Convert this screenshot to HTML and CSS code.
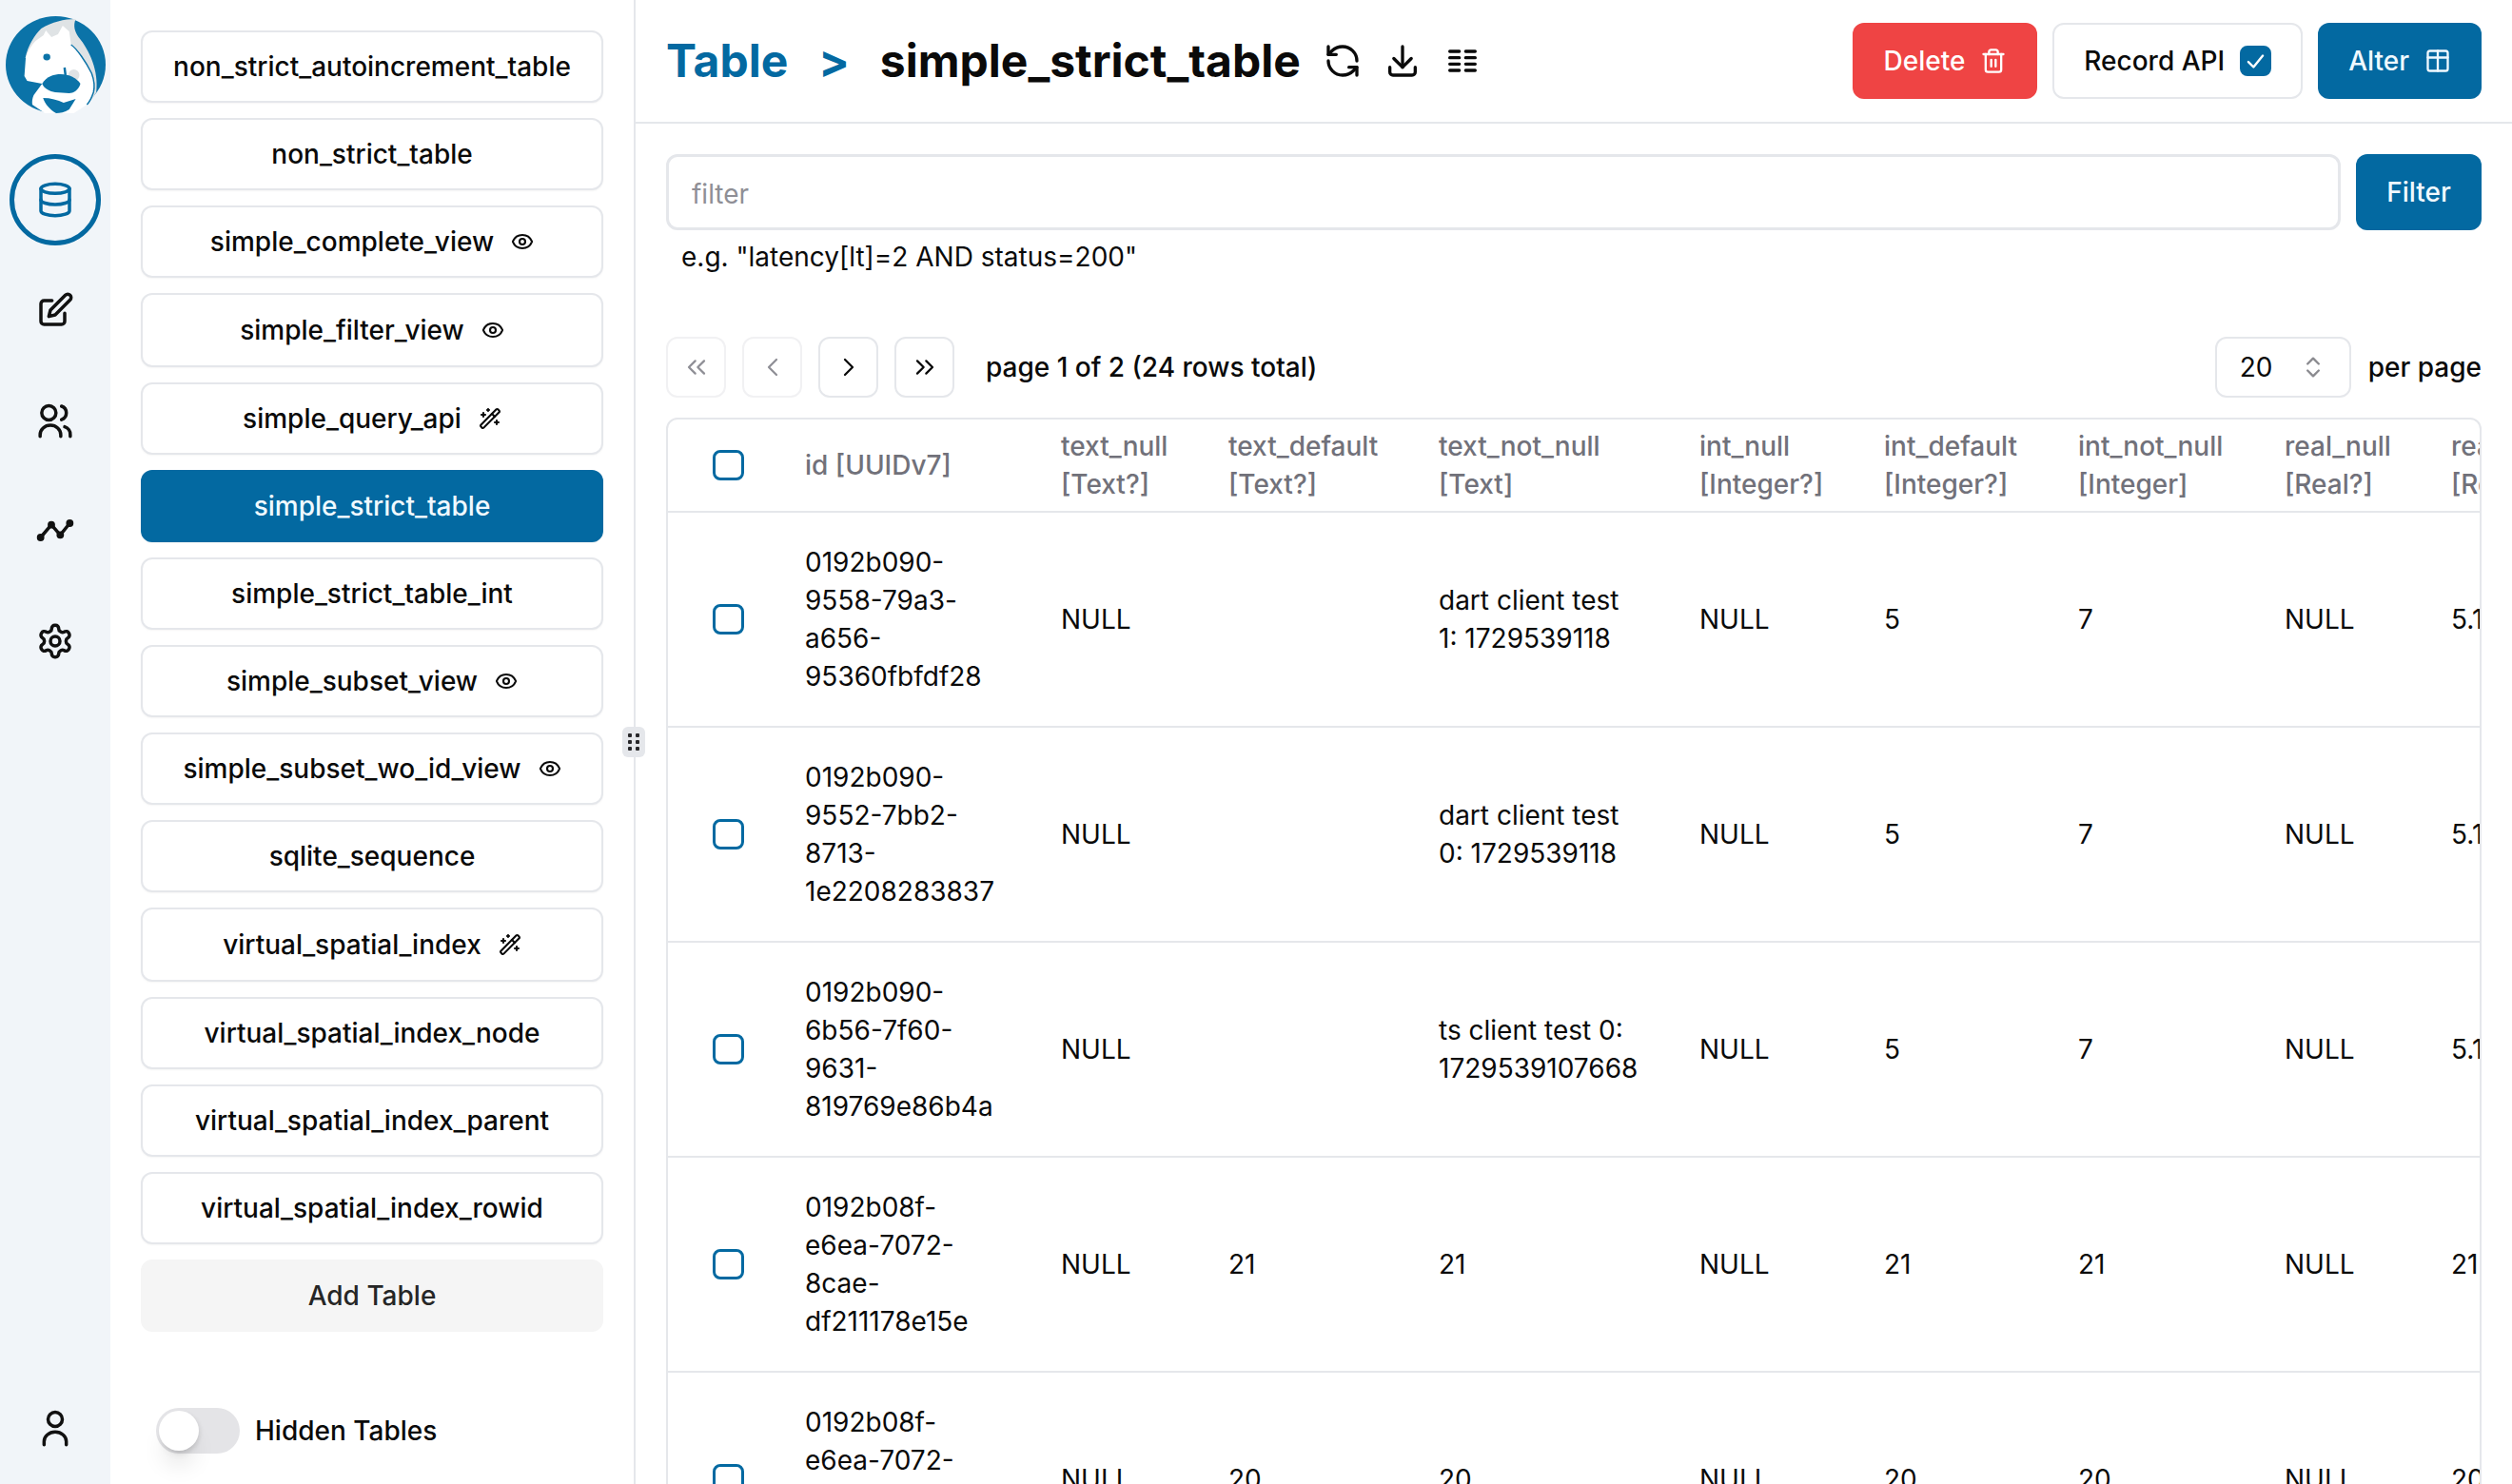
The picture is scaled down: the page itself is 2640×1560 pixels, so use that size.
FILE: index.html
```html
<!DOCTYPE html>
<html lang="en">
<head>
    <meta charset="UTF-8">
    <title>Table - simple_strict_table</title>
    <link rel="stylesheet" href="styles.css">
</head>
<body>
<svg class="sprites" xmlns="http://www.w3.org/2000/svg">
    <symbol id="i-eye" viewBox="0 0 24 24"><path d="M2.06 12.35a1 1 0 0 1 0-.7 10.75 10.75 0 0 1 19.88 0 1 1 0 0 1 0 .7 10.75 10.75 0 0 1-19.88 0"/><circle cx="12" cy="12" r="3"/></symbol>
    <symbol id="i-wand" viewBox="0 0 24 24"><path d="m21.64 3.64-1.28-1.28a1.21 1.21 0 0 0-1.72 0L2.36 18.64a1.21 1.21 0 0 0 0 1.72l1.28 1.28a1.2 1.2 0 0 0 1.72 0L21.64 5.36a1.2 1.2 0 0 0 0-1.72"/><path d="m14 7 3 3"/><path d="M5 6v4"/><path d="M19 14v4"/><path d="M10 2v2"/><path d="M7 8H3"/><path d="M21 16h-4"/><path d="M11 3H9"/></symbol>
</svg>

<div class="app">
    <nav class="rail">
        <svg class="logo" viewBox="0 0 107 102" preserveAspectRatio="none">
            <ellipse cx="53.5" cy="51" rx="53.5" ry="51" fill="#0b73a8"/>
            <path d="M21 44C24 30 31 20 38 13 50 6 62 3 75 3 72 10 74 16 78 22 90 36 100 58 97 80L92 88 60 60Z" fill="#dfe3e5"/>
            <path d="M20 63 21.5 43C24 36 28 30 32 26L40.5 20 43 15 49 22 56 19 61 10 68 16 70 30C76 34 86 48 92 60 95 68 95 76 94 80 92 86 90 90 87 93L73 102H42L28.5 93C28 90 28.5 86 30 83L39 71 23 68Z" fill="#fff"/>
            <path d="M70 30C76 34 86 48 92 60 95 68 95 76 94 80 92 86 90 90 87 93" fill="none" stroke="#0b73a8" stroke-width="1.5"/>
            <ellipse cx="44" cy="43" rx="3.8" ry="3.4" fill="#0b73a8"/>
            <circle cx="73" cy="62" r="6" fill="#dfe3e5"/>
            <path d="M63 54 64 62" stroke="#0b73a8" stroke-width="2.5" fill="none"/>
            <path d="M39 71C44 63 52 61 59 61 68 61 76 65 80 71 78 78 72 81 68 81L53 80C47 79 41 76 39 71Z" fill="#0b73a8"/>
            <path d="M40 86C48 86 56 88 62 91L75 87 68 98C63 101 58 102 54 102 47 98 42 92 40 86Z" fill="#0b73a8"/>
        </svg>

        <a class="rail-item rail-active">
            <svg class="rail-icon" viewBox="0 0 24 24"><ellipse cx="12" cy="5" rx="9" ry="3"/><path d="M3 5V19A9 3 0 0 0 21 19V5"/><path d="M3 12A9 3 0 0 0 21 12"/></svg>
        </a>
        <a class="rail-item">
            <svg class="rail-icon" viewBox="0 0 24 24"><path d="M10 6H5a2 2 0 0 0-2 2v11a2 2 0 0 0 2 2h11a2 2 0 0 0 2-2v-5"/><path d="M18.4 2.6a2.1 2.1 0 1 1 3 3L12 15l-4 1 1-4Z"/></svg>
        </a>
        <a class="rail-item">
            <svg class="rail-icon" viewBox="0 0 24 24"><circle cx="8" cy="7.2" r="4.5"/><path d="M2.5 22v-1a6.5 6 0 0 1 13 0v1"/><path d="M16 3a4.5 4.5 0 0 1 0 8.5"/><path d="M18 16a5 5 0 0 1 3.5 5v1"/></svg>
        </a>
        <a class="rail-item">
            <svg class="rail-icon" viewBox="0 0 24 24"><path d="M2.8 16.2 9.6 8.2l5.6 6.4 6-7.4"/><circle class="node" cx="2.8" cy="16.2" r="1.3"/><circle class="node" cx="9.6" cy="8.2" r="1.3"/><circle class="node" cx="15.2" cy="14.6" r="1.3"/><circle class="node" cx="21.2" cy="7.2" r="1.3"/></svg>
        </a>
        <a class="rail-item">
            <svg class="rail-icon" viewBox="0 0 24 24"><path d="M12.22 2h-.44a2 2 0 0 0-2 2v.18a2 2 0 0 1-1 1.73l-.43.25a2 2 0 0 1-2 0l-.15-.08a2 2 0 0 0-2.73.73l-.22.38a2 2 0 0 0 .73 2.73l.15.1a2 2 0 0 1 1 1.72v.51a2 2 0 0 1-1 1.74l-.15.09a2 2 0 0 0-.73 2.73l.22.38a2 2 0 0 0 2.73.73l.15-.08a2 2 0 0 1 2 0l.43.25a2 2 0 0 1 1 1.73V20a2 2 0 0 0 2 2h.44a2 2 0 0 0 2-2v-.18a2 2 0 0 1 1-1.73l.43-.25a2 2 0 0 1 2 0l.15.08a2 2 0 0 0 2.73-.73l.22-.39a2 2 0 0 0-.73-2.73l-.15-.08a2 2 0 0 1-1-1.74v-.5a2 2 0 0 1 1-1.74l.15-.09a2 2 0 0 0 .73-2.73l-.22-.38a2 2 0 0 0-2.73-.73l-.15.08a2 2 0 0 1-2 0l-.43-.25a2 2 0 0 1-1-1.73V4a2 2 0 0 0-2-2z"/><circle cx="12" cy="12" r="3"/></svg>
        </a>
        <a class="rail-item rail-bottom">
            <svg class="rail-icon" viewBox="0 0 24 24"><circle cx="12" cy="6" r="4.5"/><path d="M5 22v-2a7 6 0 0 1 14 0v2"/></svg>
        </a>
    </nav>

    <aside class="tables">
        <a class="table-link">non_strict_autoincrement_table</a>
        <a class="table-link">non_strict_table</a>
        <a class="table-link">simple_complete_view <svg class="tag-icon"><use href="#i-eye"/></svg></a>
        <a class="table-link tall">simple_filter_view <svg class="tag-icon"><use href="#i-eye"/></svg></a>
        <a class="table-link">simple_query_api <svg class="tag-icon"><use href="#i-wand"/></svg></a>
        <a class="table-link selected">simple_strict_table</a>
        <a class="table-link">simple_strict_table_int</a>
        <a class="table-link">simple_subset_view <svg class="tag-icon"><use href="#i-eye"/></svg></a>
        <a class="table-link">simple_subset_wo_id_view <svg class="tag-icon"><use href="#i-eye"/></svg></a>
        <a class="table-link">sqlite_sequence</a>
        <a class="table-link tall">virtual_spatial_index <svg class="tag-icon"><use href="#i-wand"/></svg></a>
        <a class="table-link">virtual_spatial_index_node</a>
        <a class="table-link">virtual_spatial_index_parent</a>
        <a class="table-link">virtual_spatial_index_rowid</a>
        <a class="table-link add-table">Add Table</a>

        <label class="hidden-toggle">
            <span class="switch"><span class="knob"></span></span>
            Hidden Tables
        </label>

        <div class="drag-handle">
            <i></i><i></i><i></i><i></i><i></i><i></i>
        </div>
    </aside>

    <main class="content">
        <header class="topbar">
            <div class="crumbs">
                <h1 class="crumb-root">Table</h1>
                <span class="crumb-sep">&gt;</span>
                <h1 class="crumb-name">simple_strict_table</h1>
                <svg class="head-icon" viewBox="0 0 24 24"><path d="M21 12a9 9 0 0 0-9-9 9.75 9.75 0 0 0-6.74 2.74L3 8"/><path d="M3 3v5h5"/><path d="M3 12a9 9 0 0 0 9 9 9.75 9.75 0 0 0 6.74-2.74L21 16"/><path d="M16 16h5v5"/></svg>
                <svg class="head-icon" viewBox="0 0 24 24"><path d="M12 3v13"/><path d="m6.500 10.500 5.500 5.500 5.500-5.500"/><path d="M4 16v3a2 2 0 0 0 2 2h12a2 2 0 0 0 2-2v-3"/></svg>
                <svg class="head-icon" viewBox="0 0 24 24"><path d="M4 6h6M14 6h6M4 10h6M14 10h6M4 14h6M14 14h6M4 18h6M14 18h6"/></svg>
            </div>
            <div class="actions">
                <button class="btn btn-danger">Delete
                    <svg class="btn-icon" viewBox="0 0 24 24"><path d="M3 6h18"/><path d="M19 6v14a2 2 0 0 1-2 2H7a2 2 0 0 1-2-2V6"/><path d="M8 6V4a2 2 0 0 1 2-2h4a2 2 0 0 1 2 2v2"/><path d="M10 11v6"/><path d="M14 11v6"/></svg>
                </button>
                <button class="btn btn-outline">Record API
                    <span class="checkbox checked"><svg viewBox="0 0 24 24"><path d="M5 13l5 5 9-11"/></svg></span>
                </button>
                <button class="btn btn-primary">Alter
                    <svg class="btn-icon" viewBox="0 0 24 24"><rect x="3" y="3" width="18" height="18" rx="2"/><path d="M3 9h18"/><path d="M12 3v18"/></svg>
                </button>
            </div>
        </header>

        <section class="filter-bar">
            <input class="filter-input" type="text" placeholder="filter">
            <button class="btn btn-primary filter-btn">Filter</button>
        </section>
        <p class="filter-hint">e.g. "latency[lt]=2 AND status=200"</p>

        <section class="pager">
            <button class="page-btn disabled"><svg viewBox="0 0 24 24"><path d="m11 17-5-5 5-5"/><path d="m18 17-5-5 5-5"/></svg></button>
            <button class="page-btn disabled"><svg viewBox="0 0 24 24"><path d="m15 18-6-6 6-6"/></svg></button>
            <button class="page-btn"><svg viewBox="0 0 24 24"><path d="m9 18 6-6-6-6"/></svg></button>
            <button class="page-btn"><svg viewBox="0 0 24 24"><path d="m6 17 5-5-5-5"/><path d="m13 17 5-5-5-5"/></svg></button>
            <span class="page-info">page 1 of 2 (24 rows total)</span>
            <div class="per-page">
                <span class="page-size">20 <svg viewBox="0 0 24 24"><path d="m7 15 5 5 5-5"/><path d="m7 9 5-5 5 5"/></svg></span>
                per page
            </div>
        </section>

        <div class="table-wrap">
            <table class="rows">
                <colgroup>
                    <col class="c-check"><col class="c-id"><col class="c-tnull"><col class="c-tdef"><col class="c-tnn">
                    <col class="c-inull"><col class="c-idef"><col class="c-inn"><col class="c-rnull"><col class="c-rdef">
                </colgroup>
                <thead>
                    <tr>
                        <th><span class="checkbox"></span></th>
                        <th>id [UUIDv7]</th>
                        <th>text_null<br>[Text?]</th>
                        <th>text_default<br>[Text?]</th>
                        <th>text_not_null<br>[Text]</th>
                        <th>int_null<br>[Integer?]</th>
                        <th>int_default<br>[Integer?]</th>
                        <th>int_not_null<br>[Integer]</th>
                        <th>real_null<br>[Real?]</th>
                        <th>real_default<br>[Real?]</th>
                    </tr>
                </thead>
                <tbody>
                    <tr>
                        <td><span class="checkbox"></span></td>
                        <td>0192b090-9558-79a3-a656-95360fbfdf28</td>
                        <td>NULL</td><td></td><td>dart client test 1: 1729539118</td>
                        <td>NULL</td><td>5</td><td>7</td><td>NULL</td><td>5.1</td>
                    </tr>
                    <tr>
                        <td><span class="checkbox"></span></td>
                        <td>0192b090-9552-7bb2-8713-1e2208283837</td>
                        <td>NULL</td><td></td><td>dart client test 0: 1729539118</td>
                        <td>NULL</td><td>5</td><td>7</td><td>NULL</td><td>5.1</td>
                    </tr>
                    <tr>
                        <td><span class="checkbox"></span></td>
                        <td>0192b090-6b56-7f60-9631-819769e86b4a</td>
                        <td>NULL</td><td></td><td>ts client test 0: 1729539107668</td>
                        <td>NULL</td><td>5</td><td>7</td><td>NULL</td><td>5.1</td>
                    </tr>
                    <tr>
                        <td><span class="checkbox"></span></td>
                        <td>0192b08f-e6ea-7072-8cae-df211178e15e</td>
                        <td>NULL</td><td>21</td><td>21</td>
                        <td>NULL</td><td>21</td><td>21</td><td>NULL</td><td>21</td>
                    </tr>
                    <tr>
                        <td><span class="checkbox"></span></td>
                        <td>0192b08f-e6ea-7072-8cae-df211178e15d</td>
                        <td>NULL</td><td>20</td><td>20</td>
                        <td>NULL</td><td>20</td><td>20</td><td>NULL</td><td>20</td>
                    </tr>
                </tbody>
            </table>
        </div>
    </main>
</div>
</body>
</html>
```

FILE: styles.css
```css
* {
    box-sizing: border-box;
}
html, body {
    margin: 0;
    height: 100%;
    overflow: hidden;
}
body {
    font-family: Inter, "Liberation Sans", sans-serif;
    font-size: 28px;
    line-height: 40px;
    color: #0a0a0a;
    background: #fff;
}
.sprites {
    display: none;
}
.app {
    display: flex;
    height: 1560px;
}

/* left icon rail */
.rail {
    width: 116px;
    flex: none;
    background: #f1f5f9;
    display: flex;
    flex-direction: column;
    align-items: center;
    padding: 17px 0 10px;
}
.logo {
    width: 105px;
    height: 102px;
    margin-bottom: 43px;
}
.rail-item {
    width: 96px;
    height: 96px;
    margin-bottom: 20px;
    border-radius: 50%;
    display: flex;
    align-items: center;
    justify-content: center;
    color: #111;
}
.rail-item:last-child {
    margin-bottom: 0;
}
.rail-active {
    border: 5px solid #0369a1;
    color: #0369a1;
}
.rail-bottom {
    margin-top: auto;
}
.rail-icon {
    width: 40px;
    height: 40px;
    fill: none;
    stroke: currentColor;
    stroke-width: 2.1;
    stroke-linecap: round;
    stroke-linejoin: round;
}
.rail-icon .node {
    fill: currentColor;
}

/* table list */
.tables {
    width: 552px;
    flex: none;
    position: relative;
    padding: 32px 32px 0 32px;
    border-right: 2px solid #e5e7eb;
    display: flex;
    flex-direction: column;
    gap: 16px;
}
.table-link {
    height: 76px;
    flex: none;
    border: 2px solid #e5e7eb;
    border-radius: 12px;
    display: flex;
    align-items: center;
    justify-content: center;
    gap: 18px;
    font-weight: 500;
    background: #fff;
    box-shadow: 0 1px 2px rgba(0, 0, 0, 0.04);
}
.tall {
    height: 78px;
}
.selected {
    background: #0369a1;
    border-color: #0369a1;
    color: #f0f9ff;
}
.add-table {
    background: #f5f5f5;
    border-color: #f5f5f5;
    box-shadow: none;
    color: #262626;
}
.tag-icon {
    width: 24px;
    height: 24px;
    fill: none;
    stroke: currentColor;
    stroke-width: 2.1;
    stroke-linecap: round;
    stroke-linejoin: round;
}
.hidden-toggle {
    display: flex;
    align-items: center;
    gap: 16px;
    margin: 64px 0 0 16px;
    font-weight: 500;
}
.switch {
    width: 88px;
    height: 48px;
    border-radius: 24px;
    background: #e4e4e7;
    padding: 3px;
}
.knob {
    display: block;
    width: 42px;
    height: 42px;
    border-radius: 50%;
    background: #fff;
    box-shadow: 0 20px 25px -5px rgba(0, 0, 0, 0.1), 0 8px 10px -6px rgba(0, 0, 0, 0.1), 2px 2px 4px rgba(0, 0, 0, 0.08);
}
.drag-handle {
    position: absolute;
    right: -12px;
    top: 764px;
    width: 24px;
    height: 32px;
    border-radius: 6px;
    background: #e5e7eb;
    display: grid;
    grid-template-columns: 4px 4px;
    grid-auto-rows: 4px;
    gap: 3px 4px;
    justify-content: center;
    align-content: center;
}
.drag-handle i {
    background: #27272a;
    border-radius: 1px;
}

/* main column */
.content {
    flex: 1;
    min-width: 0;
    overflow: hidden;
}
.topbar {
    height: 130px;
    border-bottom: 2px solid #e5e7eb;
    padding: 0 32px;
    display: flex;
    align-items: center;
    justify-content: space-between;
}
.crumbs {
    display: flex;
    align-items: center;
}
.crumb-root, .crumb-name {
    margin: 0;
    font-size: 48px;
    line-height: 64px;
    font-weight: 700;
}
.crumb-root {
    color: #0369a1;
}
.crumb-sep {
    font-size: 48px;
    font-weight: 700;
    color: #0369a1;
    margin: 0 32px;
}
.head-icon {
    width: 40px;
    height: 40px;
    margin-left: 23px;
    fill: none;
    stroke: #0a0a0a;
    stroke-width: 2;
    stroke-linecap: round;
    stroke-linejoin: round;
}
.crumb-name + .head-icon {
    margin-left: 24px;
}
.actions {
    display: flex;
    gap: 16px;
}
.btn {
    height: 80px;
    padding: 0 30px;
    border-radius: 12px;
    border: 2px solid transparent;
    font: inherit;
    font-weight: 500;
    display: flex;
    align-items: center;
    gap: 16px;
}
.btn-danger {
    background: #ef4444;
    color: #fff;
}
.btn-outline {
    background: #fff;
    border-color: #e5e7eb;
    color: #0a0a0a;
    padding: 0 31px;
}
.btn-primary {
    background: #0369a1;
    color: #f0f9ff;
}
.btn-icon {
    width: 28px;
    height: 28px;
    fill: none;
    stroke: currentColor;
    stroke-width: 2;
    stroke-linecap: round;
    stroke-linejoin: round;
}
.checkbox {
    display: inline-block;
    width: 33px;
    height: 32px;
    border: 3px solid #0369a1;
    border-radius: 8px;
}
.checked {
    background: #0369a1;
}
.checked svg {
    display: block;
    width: 100%;
    height: 100%;
    fill: none;
    stroke: #fff;
    stroke-width: 2.2;
    stroke-linecap: round;
    stroke-linejoin: round;
}

/* filter */
.filter-bar {
    display: flex;
    gap: 16px;
    padding: 32px 32px 0;
}
.filter-input {
    flex: 1;
    height: 80px;
    border: 3px solid #e5e7eb;
    border-radius: 12px;
    padding: 3px 24px 0;
    font: inherit;
    outline: none;
}
.filter-input::placeholder {
    color: #8f8f96;
}
.filter-btn {
    width: 132px;
    justify-content: center;
    padding: 0;
}
.filter-hint {
    margin: 8px 32px 0 48px;
    font-weight: 400;
}

/* pagination */
.pager {
    display: flex;
    align-items: center;
    gap: 17px;
    margin-top: 64px;
    padding: 0 32px;
}
.page-btn {
    width: 63px;
    height: 64px;
    padding: 0;
    background: #fff;
    border: 2px solid #e5e7eb;
    border-radius: 12px;
    display: flex;
    align-items: center;
    justify-content: center;
}
.page-btn svg {
    width: 32px;
    height: 32px;
    fill: none;
    stroke: #0a0a0a;
    stroke-width: 1.7;
    stroke-linecap: round;
    stroke-linejoin: round;
}
.page-btn.disabled {
    border-color: #f1f1f3;
}
.page-btn.disabled svg {
    stroke: #8f8f96;
}
.page-info {
    margin-left: 16px;
    font-weight: 500;
}
.per-page {
    margin-left: auto;
    display: flex;
    align-items: center;
    gap: 18px;
    font-weight: 500;
}
.page-size {
    width: 143px;
    height: 64px;
    border: 2px solid #e5e7eb;
    border-radius: 12px;
    padding: 0 24px;
    display: flex;
    align-items: center;
    justify-content: space-between;
    font-weight: 400;
}
.page-size svg {
    width: 28px;
    height: 28px;
    fill: none;
    stroke: #8a8a8f;
    stroke-width: 2;
    stroke-linecap: round;
    stroke-linejoin: round;
}

/* data table */
.table-wrap {
    margin: 21px 32px 0;
    border: 2px solid #e5e7eb;
    border-radius: 12px;
    overflow: hidden;
}
.rows {
    border-collapse: collapse;
    table-layout: fixed;
    width: 2050px;
}
.c-check { width: 112px; }
.c-id { width: 269px; }
.c-tnull { width: 176px; }
.c-tdef { width: 221px; }
.c-tnn { width: 274px; }
.c-inull { width: 194px; }
.c-idef { width: 204px; }
.c-inn { width: 217px; }
.c-rnull { width: 175px; }
.c-rdef { width: 208px; }
.rows th {
    padding: 8px 32px;
    text-align: left;
    font-weight: 500;
    color: #71717a;
    white-space: nowrap;
}
.rows td {
    padding: 32px;
    font-weight: 400;
}
.rows tr {
    border-bottom: 2px solid #e5e7eb;
}
.rows th:first-child, .rows td:first-child {
    padding-left: 47px;
    padding-right: 0;
}
.rows .checkbox {
    display: block;
}
```
